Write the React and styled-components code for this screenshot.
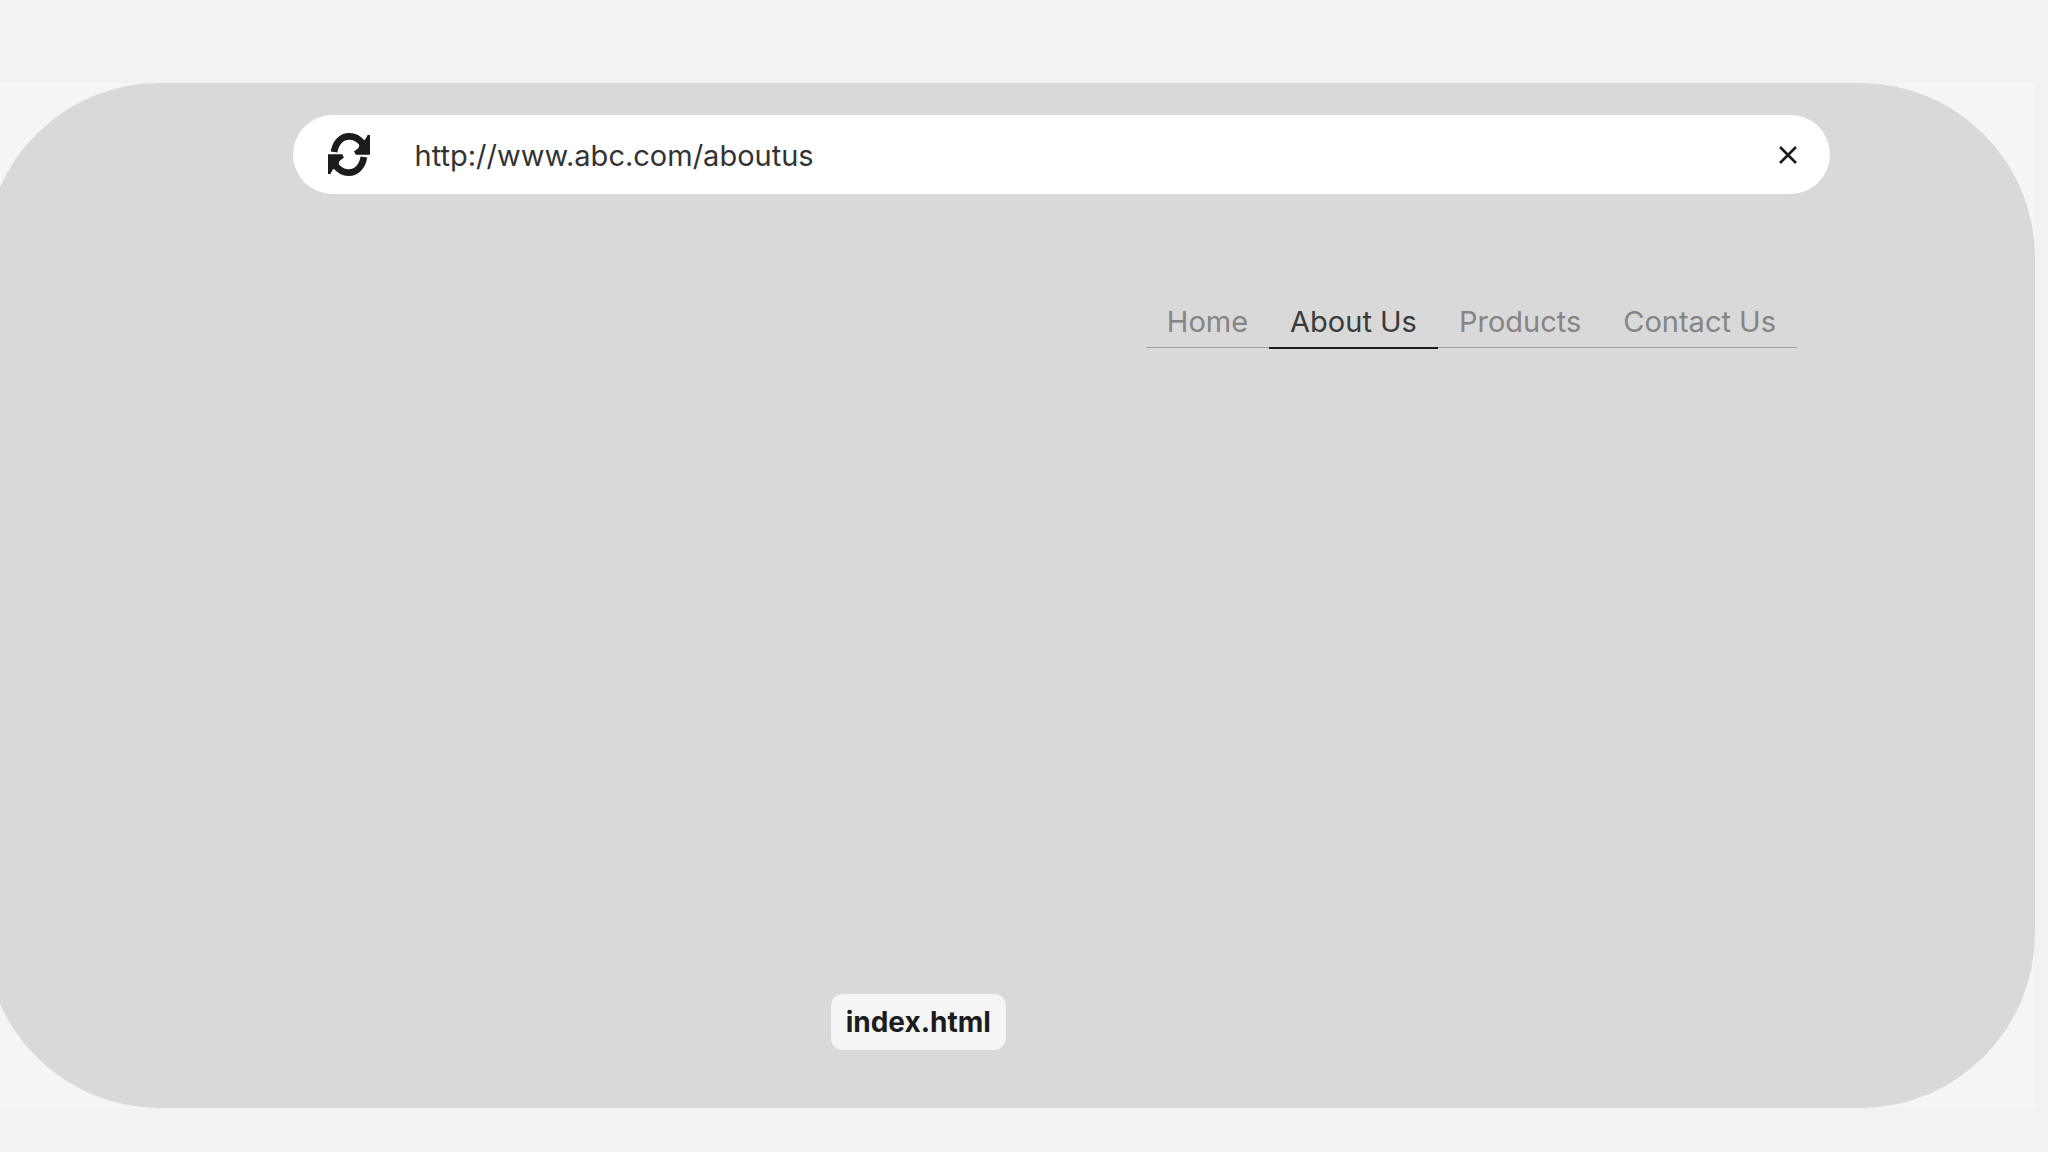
import { useState } from "react";
import styled, { createGlobalStyle } from "styled-components";

const tabs = ["Home", "About Us", "Products", "Contact Us"];

const ReloadArrow = () => (
	<>
		<path d="M18 56C22 28 40 10 63 10C80 10 92 18 102 31" fill="none" stroke="currentColor" strokeWidth="20" />
		<path d="M124 6V64H82L77 55L90 44L96 24L110 19L117 6Z" fill="currentColor" />
	</>
);

const ReloadIcon = () => (
	<svg width="42" height="43" viewBox="0 0 124 127">
		<ReloadArrow />
		<g transform="rotate(180 62 63.5)">
			<ReloadArrow />
		</g>
	</svg>
);

const App = () => {
	const [url, setUrl] = useState("http://www.abc.com/aboutus");
	const [active, setActive] = useState("About Us");

	return (
		<>
			<GlobalStyle />
			<Frame>
				<Browser>
					<AddressBar>
						<IconButton type="button" aria-label="Reload">
							<ReloadIcon />
						</IconButton>
						<UrlInput
							type="text"
							aria-label="Address"
							spellCheck={false}
							value={url}
							onChange={(e) => setUrl(e.target.value)}
						/>
						<IconButton type="button" aria-label="Clear" onClick={() => setUrl("")}>
							<svg width="18" height="18" viewBox="0 0 18 18" fill="none" stroke="currentColor" strokeWidth="2.6">
								<path d="M1 1L17 17M17 1L1 17" />
							</svg>
						</IconButton>
					</AddressBar>
					<Page>
						<Nav>
							{tabs.map((tab) => (
								<NavLink key={tab} href="#" $active={tab === active} onClick={() => setActive(tab)}>
									{tab}
								</NavLink>
							))}
						</Nav>
						<FileLabel>index.html</FileLabel>
					</Page>
				</Browser>
			</Frame>
		</>
	);
};

const GlobalStyle = createGlobalStyle`
	* {
		box-sizing: border-box;
	}

	body {
		margin: 0;
		background: #f2f2f2;
		color: #1c1c1c;
		font-family: Inter, "Liberation Sans", sans-serif;
	}

	#root {
		display: flow-root;
	}
`;

const Frame = styled.main`
	margin: 83px 13px 44px 0;
	background: #f5f5f5;
	overflow: hidden;
`;

/* runs off the left edge of the window */
const Browser = styled.div`
	display: flex;
	flex-direction: column;
	min-height: calc(100vh - 127px);
	margin-left: -15px;
	padding: 32px 0 58px;
	background: #d9d9d9;
	border-radius: 175px;
`;

const AddressBar = styled.div`
	display: flex;
	align-items: center;
	height: 79px;
	margin: 0 10% 0 15%;
	padding: 0 33px 0 35px;
	background: #ffffff;
	border-radius: 40px;
`;

const IconButton = styled.button`
	display: flex;
	padding: 0;
	border: none;
	background: none;
	color: #1c1c1c;
	cursor: pointer;
`;

const UrlInput = styled.input`
	flex: 1;
	min-width: 0;
	margin: 0 24px 0 45px;
	padding: 2px 0 0;
	border: none;
	outline: none;
	background: none;
	color: #333333;
	font-family: inherit;
	font-size: 29px;
	line-height: 40px;
`;

const Page = styled.div`
	flex: 1;
	display: flex;
	flex-direction: column;
	align-items: flex-start;
	justify-content: space-between;
	margin: 0 10% 0 15%;
	padding-top: 102px;
`;

const Nav = styled.nav`
	display: flex;
	align-items: flex-start;
	align-self: flex-end;
	margin-right: 33px;
`;

const NavLink = styled.a`
	padding: 6px 21px 5px;
	border-bottom: ${({ $active }) => ($active ? "2px solid #1c1c1c" : "1px solid #a0a0a0")};
	color: ${({ $active }) => ($active ? "#3a3a3a" : "#858585")};
	font-size: 29px;
	line-height: 40px;
	text-decoration: none;
`;

const FileLabel = styled.div`
	margin-left: 35%;
	padding: 8px 15px;
	background: #f5f5f5;
	border-radius: 12px;
	font-size: 28px;
	font-weight: 700;
	line-height: 40px;
`;

export default App;
